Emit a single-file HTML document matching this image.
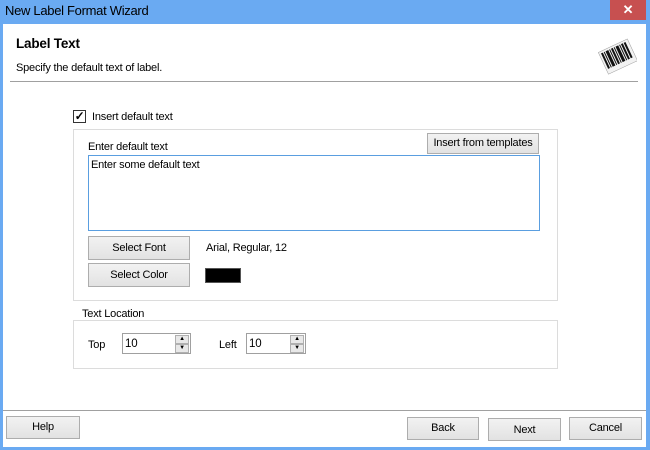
<!DOCTYPE html>
<html><head><style>
*{margin:0;padding:0;box-sizing:border-box}
body{width:650px;height:450px;background:#6aaaf2;font-family:"Liberation Sans",sans-serif;font-size:11px;letter-spacing:-0.2px;color:#000;position:relative;overflow:hidden}
.a{position:absolute;white-space:nowrap}
.title{left:5px;top:3px;font-size:13px;letter-spacing:-0.3px;color:#000}
.close{left:610px;top:0;width:36px;height:20px;background:#c75050;color:#fff;text-align:center;font-size:13px;line-height:20px;font-weight:bold}
.client{left:3px;top:24px;width:643px;height:423px;background:#fff}
.btn{position:absolute;white-space:nowrap;background:linear-gradient(#f2f2f2,#e2e2e2);border:1px solid #adadad;text-align:center;font-size:11px}
.grp{position:absolute;border:1px solid #dcdcdc}
.spin{position:absolute;border:1px solid #a0a0a0;background:#fff;height:21px}
.spin span{position:absolute;left:2px;top:4px;color:#000;font-size:11.5px}
.arr{position:absolute;right:1px;width:14px;height:9px;background:#e8e8e8;border:1px solid #b0b0b0;font-size:6px;line-height:7px;text-align:center}
</style></head><body>
<div class="a title">New Label Format Wizard</div>
<div class="a close">✕</div>
<div class="a client"></div>
<div class="a" style="left:16px;top:36px;font-size:13.5px;font-weight:bold">Label Text</div>
<div class="a" style="left:16px;top:62px">Specify the default text of label.</div>
<div class="a" style="left:10px;top:81px;width:628px;height:1px;background:#a0a0a0"></div>
<svg class="a" style="left:597px;top:37px" width="40" height="40" viewBox="0 0 40 40">
<g transform="rotate(-25 20 20)" fill="#111">
<rect x="5" y="8" width="32" height="24" fill="#f2f2f2" stroke="#999" stroke-width=".5"/>
<rect x="7" y="10" width="2" height="17"/><rect x="10" y="10" width="1" height="17"/><rect x="12" y="10" width="3" height="17"/><rect x="16" y="10" width="1" height="17"/><rect x="18" y="10" width="2" height="17"/><rect x="21" y="10" width="1" height="17"/><rect x="23" y="10" width="3" height="17"/><rect x="27" y="10" width="1" height="17"/><rect x="29" y="10" width="2" height="17"/><rect x="32" y="10" width="2" height="17"/>
</g></svg>
<div class="a" style="left:73px;top:110px;width:13px;height:13px;border:1px solid #333;background:#fff;font-size:12px;line-height:11px;text-align:center;font-weight:bold">✓</div>
<div class="a" style="left:92px;top:111px">Insert default text</div>
<div class="grp" style="left:73px;top:129px;width:485px;height:172px"></div>
<div class="a" style="left:88px;top:141px">Enter default text</div>
<div class="btn" style="left:427px;top:133px;width:112px;height:21px;line-height:19px">Insert from templates</div>
<div class="a" style="left:88px;top:155px;width:452px;height:76px;border:1px solid #5a9ee0;background:#fff"></div>
<div class="a" style="left:91px;top:159px">Enter some default text</div>
<div class="btn" style="left:88px;top:236px;width:102px;height:24px;line-height:22px">Select Font</div>
<div class="a" style="left:206px;top:242px">Arial, Regular, 12</div>
<div class="btn" style="left:88px;top:263px;width:102px;height:24px;line-height:22px">Select Color</div>
<div class="a" style="left:205px;top:268px;width:36px;height:15px;background:#000;border:1px solid #555"></div>
<div class="grp" style="left:73px;top:320px;width:485px;height:49px"></div>
<div class="a" style="left:80px;top:308px;background:#fff;padding:0 2px">Text Location</div>
<div class="a" style="left:88px;top:339px">Top</div>
<div class="spin" style="left:122px;top:333px;width:69px"><span>10</span><div class="arr" style="top:1px">▲</div><div class="arr" style="top:10px">▼</div></div>
<div class="a" style="left:219px;top:339px">Left</div>
<div class="spin" style="left:246px;top:333px;width:60px"><span>10</span><div class="arr" style="top:1px">▲</div><div class="arr" style="top:10px">▼</div></div>
<div class="a" style="left:3px;top:410px;width:643px;height:1px;background:#a0a0a0"></div>
<div class="btn" style="left:6px;top:416px;width:74px;height:23px;line-height:21px">Help</div>
<div class="btn" style="left:407px;top:417px;width:72px;height:23px;line-height:21px">Back</div>
<div class="btn" style="left:488px;top:418px;width:73px;height:23px;line-height:23px">Next</div>
<div class="btn" style="left:569px;top:417px;width:73px;height:23px;line-height:21px">Cancel</div>
</body></html>
